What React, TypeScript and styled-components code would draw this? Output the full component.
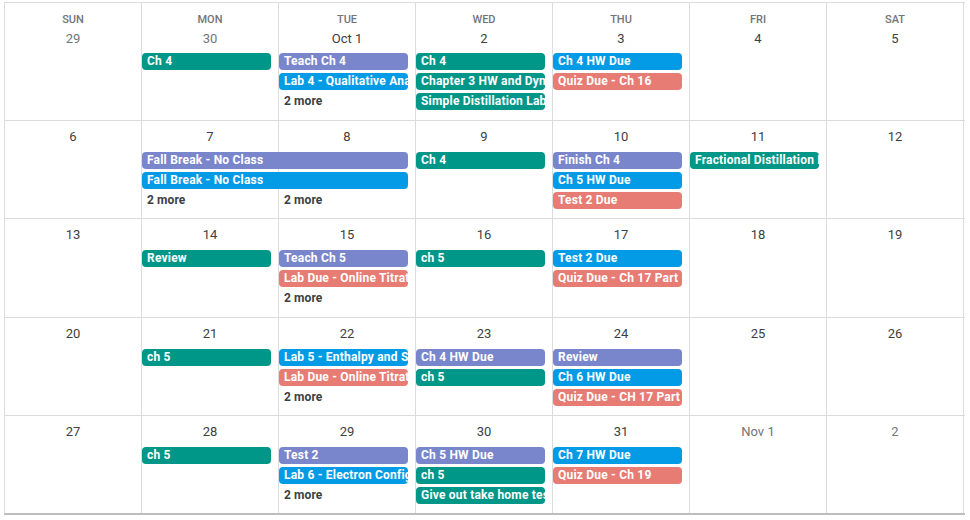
import React from 'react'
import styled, { createGlobalStyle } from 'styled-components';

const GlobalStyle = createGlobalStyle`
    body {
        margin: 0;
        background: #ffffff;
        font-family: Roboto, "Liberation Sans", Arial, sans-serif;
    }
`;

const Colors = {
    teal: '#009688',
    lavender: '#7986cb',
    peacock: '#039be5',
    flamingo: '#e67c73',
    line: '#dadce0',
    muted: '#70757a',
    text: '#3c4043',
};

type Tone = 'teal' | 'lavender' | 'peacock' | 'flamingo';

interface CalEvent {
    col: number;
    row: number;
    span?: number;
    title: string;
    tone: Tone;
}

interface Week {
    days: { label: string; muted?: boolean }[];
    events: CalEvent[];
    more: { col: number; row: number }[];
}

const CalendarWrapper = styled.div`
    width: 960px;
    margin: 2px 0 0 4px;
    border-left: 1px solid ${Colors.line};
    border-top: 1px solid ${Colors.line};
    border-bottom: 2px solid #bdbdbd;
`;

const WeekRow = styled.div<{ $header: boolean }>`
    display: grid;
    grid-template-columns: repeat(7, 137px);
    grid-template-rows: ${p => (p.$header ? '25px 25px' : '31px')} repeat(3, 20px) 1fr;
    height: ${p => (p.$header ? 118 : 98)}px;
    box-sizing: border-box;
    border-bottom: 1px solid ${Colors.line};

    &:nth-child(3) {
        height: 99px;
    }

    &:last-child {
        border-bottom: none;
        height: 97px;
    }
`;

const DayColumn = styled.div<{ $col: number }>`
    grid-column: ${p => p.$col};
    grid-row: 1 / -1;
    border-right: 1px solid ${Colors.line};
`;

const WeekdayName = styled.div<{ $col: number }>`
    grid-column: ${p => p.$col};
    grid-row: 1;
    padding-top: 8px;
    margin-right: 1px;
    text-align: center;
    font-size: 11px;
    font-weight: 500;
    line-height: 17px;
    color: ${Colors.muted};
    text-transform: uppercase;
`;

const DateLabel = styled.div<{ $col: number; $row: number; $muted?: boolean }>`
    grid-column: ${p => p.$col};
    grid-row: ${p => p.$row};
    padding-top: ${p => (p.$row === 1 ? 6 : 1)}px;
    margin-right: 1px;
    text-align: center;
    font-size: 13px;
    line-height: 20px;
    color: ${p => (p.$muted ? Colors.muted : Colors.text)};
`;

const EventPill = styled.div<{ $tone: Tone }>`
    height: 17px;
    margin-right: 8px;
    padding: 0 5px;
    border-radius: 4px;
    background: ${p => Colors[p.$tone]};
    color: #ffffff;
    font-size: 12px;
    font-weight: 700;
    letter-spacing: 0.2px;
    line-height: 17px;
    white-space: nowrap;
    overflow: hidden;
`;

const MoreLink = styled.div`
    padding-left: 5px;
    font-size: 12px;
    font-weight: 700;
    letter-spacing: 0.1px;
    line-height: 17px;
    color: ${Colors.text};
`;

const WEEKDAYS = ['Sun', 'Mon', 'Tue', 'Wed', 'Thu', 'Fri', 'Sat'];

const days = (labels: string[], muted: number[] = []) =>
    labels.map((label, i) => ({ label, muted: muted.includes(i) }));

const WEEKS: Week[] = [
    {
        days: days(['29', '30', 'Oct 1', '2', '3', '4', '5'], [0, 1]),
        events: [
            { col: 2, row: 1, title: 'Ch 4', tone: 'teal' },
            { col: 3, row: 1, title: 'Teach Ch 4', tone: 'lavender' },
            { col: 3, row: 2, title: 'Lab 4 - Qualitative Analysis', tone: 'peacock' },
            { col: 4, row: 1, title: 'Ch 4', tone: 'teal' },
            { col: 4, row: 2, title: 'Chapter 3 HW and Dynamic Equilibrium', tone: 'teal' },
            { col: 4, row: 3, title: 'Simple Distillation Lab', tone: 'teal' },
            { col: 5, row: 1, title: 'Ch 4 HW Due', tone: 'peacock' },
            { col: 5, row: 2, title: 'Quiz Due - Ch 16', tone: 'flamingo' },
        ],
        more: [{ col: 3, row: 3 }],
    },
    {
        days: days(['6', '7', '8', '9', '10', '11', '12']),
        events: [
            { col: 2, row: 1, span: 2, title: 'Fall Break - No Class', tone: 'lavender' },
            { col: 2, row: 2, span: 2, title: 'Fall Break - No Class', tone: 'peacock' },
            { col: 4, row: 1, title: 'Ch 4', tone: 'teal' },
            { col: 5, row: 1, title: 'Finish Ch 4', tone: 'lavender' },
            { col: 5, row: 2, title: 'Ch 5 HW Due', tone: 'peacock' },
            { col: 5, row: 3, title: 'Test 2 Due', tone: 'flamingo' },
            { col: 6, row: 1, title: 'Fractional Distillation Lab', tone: 'teal' },
        ],
        more: [{ col: 2, row: 3 }, { col: 3, row: 3 }],
    },
    {
        days: days(['13', '14', '15', '16', '17', '18', '19']),
        events: [
            { col: 2, row: 1, title: 'Review', tone: 'teal' },
            { col: 3, row: 1, title: 'Teach Ch 5', tone: 'lavender' },
            { col: 3, row: 2, title: 'Lab Due - Online Titration', tone: 'flamingo' },
            { col: 4, row: 1, title: 'ch 5', tone: 'teal' },
            { col: 5, row: 1, title: 'Test 2 Due', tone: 'peacock' },
            { col: 5, row: 2, title: 'Quiz Due - Ch 17 Part 1', tone: 'flamingo' },
        ],
        more: [{ col: 3, row: 3 }],
    },
    {
        days: days(['20', '21', '22', '23', '24', '25', '26']),
        events: [
            { col: 2, row: 1, title: 'ch 5', tone: 'teal' },
            { col: 3, row: 1, title: 'Lab 5 - Enthalpy and Stoichiometry', tone: 'peacock' },
            { col: 3, row: 2, title: 'Lab Due - Online Titration', tone: 'flamingo' },
            { col: 4, row: 1, title: 'Ch 4 HW Due', tone: 'lavender' },
            { col: 4, row: 2, title: 'ch 5', tone: 'teal' },
            { col: 5, row: 1, title: 'Review', tone: 'lavender' },
            { col: 5, row: 2, title: 'Ch 6 HW Due', tone: 'peacock' },
            { col: 5, row: 3, title: 'Quiz Due - CH 17 Part 2', tone: 'flamingo' },
        ],
        more: [{ col: 3, row: 3 }],
    },
    {
        days: days(['27', '28', '29', '30', '31', 'Nov 1', '2'], [5, 6]),
        events: [
            { col: 2, row: 1, title: 'ch 5', tone: 'teal' },
            { col: 3, row: 1, title: 'Test 2', tone: 'lavender' },
            { col: 3, row: 2, title: 'Lab 6 - Electron Configuration', tone: 'peacock' },
            { col: 4, row: 1, title: 'Ch 5 HW Due', tone: 'lavender' },
            { col: 4, row: 2, title: 'ch 5', tone: 'teal' },
            { col: 4, row: 3, title: 'Give out take home test', tone: 'teal' },
            { col: 5, row: 1, title: 'Ch 7 HW Due', tone: 'peacock' },
            { col: 5, row: 2, title: 'Quiz Due - Ch 19', tone: 'flamingo' },
        ],
        more: [{ col: 3, row: 3 }],
    },
];

const App: React.FC = () => (
    <>
        <GlobalStyle />
        <CalendarWrapper>
            {WEEKS.map((week, w) => {
                const header = w === 0;
                const offset = header ? 2 : 1;
                return (
                    <WeekRow key={w} $header={header}>
                        {week.days.map((_, i) => <DayColumn key={`c${i}`} $col={i + 1} />)}
                        {header && WEEKDAYS.map((name, i) => (
                            <WeekdayName key={name} $col={i + 1}>{name}</WeekdayName>
                        ))}
                        {week.days.map((day, i) => (
                            <DateLabel key={`d${i}`} $col={i + 1} $row={offset} $muted={day.muted}>
                                {day.label}
                            </DateLabel>
                        ))}
                        {week.events.map((ev, i) => (
                            <EventPill
                                key={`e${i}`}
                                $tone={ev.tone}
                                style={{
                                    gridColumn: `${ev.col} / span ${ev.span ?? 1}`,
                                    gridRow: ev.row + offset,
                                }}
                            >
                                {ev.title}
                            </EventPill>
                        ))}
                        {week.more.map((m, i) => (
                            <MoreLink key={`m${i}`} style={{ gridColumn: m.col, gridRow: m.row + offset }}>
                                2 more
                            </MoreLink>
                        ))}
                    </WeekRow>
                );
            })}
        </CalendarWrapper>
    </>
)

export default App;
